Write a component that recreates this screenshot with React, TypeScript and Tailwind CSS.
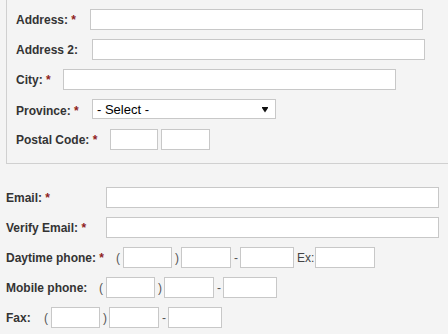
import React from "react";

const Req = () => <span className="text-[#8f1d1d]"> *</span>;

const Label = ({ text, req, w }: { text: string; req?: boolean; w: string }) => (
  <span className={`shrink-0 whitespace-nowrap font-bold text-[12px] leading-[14px] text-[#333] ${w}`}>
    {text}
    {req ? <Req /> : null}
  </span>
);

const Box = ({ w, cls = "" }: { w: string; cls?: string }) => (
  <input
    type="text"
    className={`h-[21px] shrink-0 border border-[#c8c8c8] bg-white outline-none ${w} ${cls}`}
  />
);

const Sym = ({ c, cls = "" }: { c: string; cls?: string }) => (
  <span className={`shrink-0 text-[12px] leading-[14px] text-[#555] ${cls}`}>{c}</span>
);

export default function App() {
  return (
    <div className="w-[448px] h-[334px] overflow-hidden bg-[#f4f4f4] font-['Liberation_Sans',Arial,sans-serif]">
      <div className="ml-[6px] border-l border-b border-[#d0d0d0] pl-[9px] pt-[9px] pb-[13px] flex flex-col gap-[9px]">
        <div className="flex items-center h-[21px]">
          <Label text="Address:" req w="w-[74px]" />
          <Box w="w-[333px]" />
        </div>
        <div className="flex items-center h-[21px]">
          <Label text="Address 2:" w="w-[76px]" />
          <Box w="w-[333px]" />
        </div>
        <div className="flex items-center h-[21px]">
          <Label text="City:" req w="w-[47px]" />
          <Box w="w-[333px]" />
        </div>
        <div className="flex items-start h-[21px]">
          <span className="self-center">
            <Label text="Province:" req w="w-[76px] inline-block" />
          </span>
          <div className="w-[184px] h-[20px] border border-[#c8c8c8] bg-white flex items-center justify-between pl-[4px] pr-[7px] text-[13px] leading-[15px] text-black">
            <span>- Select -</span>
            <svg width="6" height="6" viewBox="0 0 6 6" className="mt-[1px]">
              <rect x="0" y="0" width="6" height="1" fill="#111" />
              <polygon points="0,1 6,1 3,5.5" fill="#111" />
            </svg>
          </div>
        </div>
        <div className="flex items-center h-[21px]">
          <Label text="Postal Code:" req w="w-[94px]" />
          <Box w="w-[48px]" />
          <Box w="w-[49px]" cls="ml-[3px]" />
        </div>
      </div>

      <div className="mt-[23px] pl-[6px] flex flex-col gap-[9px]">
        <div className="flex items-center h-[21px]">
          <Label text="Email:" req w="w-[100px]" />
          <Box w="w-[333px]" />
        </div>
        <div className="flex items-center h-[21px]">
          <Label text="Verify Email:" req w="w-[100px]" />
          <Box w="w-[333px]" />
        </div>
        <div className="flex items-center h-[21px]">
          <Label text="Daytime phone:" req w="w-[110px]" />
          <Sym c="(" cls="w-[4px]" />
          <Box w="w-[49px]" cls="ml-[3px]" />
          <Sym c=")" cls="w-[4px] ml-[3px]" />
          <Box w="w-[50px]" cls="ml-[2px]" />
          <Sym c="-" cls="w-[4px] ml-[3px]" />
          <Box w="w-[54px]" cls="ml-[2px]" />
          <span className="shrink-0 ml-[3px] text-[12px] leading-[14px] text-[#444]">Ex:</span>
          <Box w="w-[60px]" cls="ml-[1px]" />
        </div>
        <div className="flex items-center h-[21px]">
          <Label text="Mobile phone:" w="w-[93px]" />
          <Sym c="(" cls="w-[4px]" />
          <Box w="w-[49px]" cls="ml-[3px]" />
          <Sym c=")" cls="w-[4px] ml-[3px]" />
          <Box w="w-[50px]" cls="ml-[2px]" />
          <Sym c="-" cls="w-[4px] ml-[3px]" />
          <Box w="w-[54px]" cls="ml-[2px]" />
        </div>
        <div className="flex items-center h-[21px]">
          <Label text="Fax:" w="w-[38px]" />
          <Sym c="(" cls="w-[4px]" />
          <Box w="w-[49px]" cls="ml-[3px]" />
          <Sym c=")" cls="w-[4px] ml-[3px]" />
          <Box w="w-[50px]" cls="ml-[2px]" />
          <Sym c="-" cls="w-[4px] ml-[3px]" />
          <Box w="w-[54px]" cls="ml-[2px]" />
        </div>
      </div>
    </div>
  );
}
